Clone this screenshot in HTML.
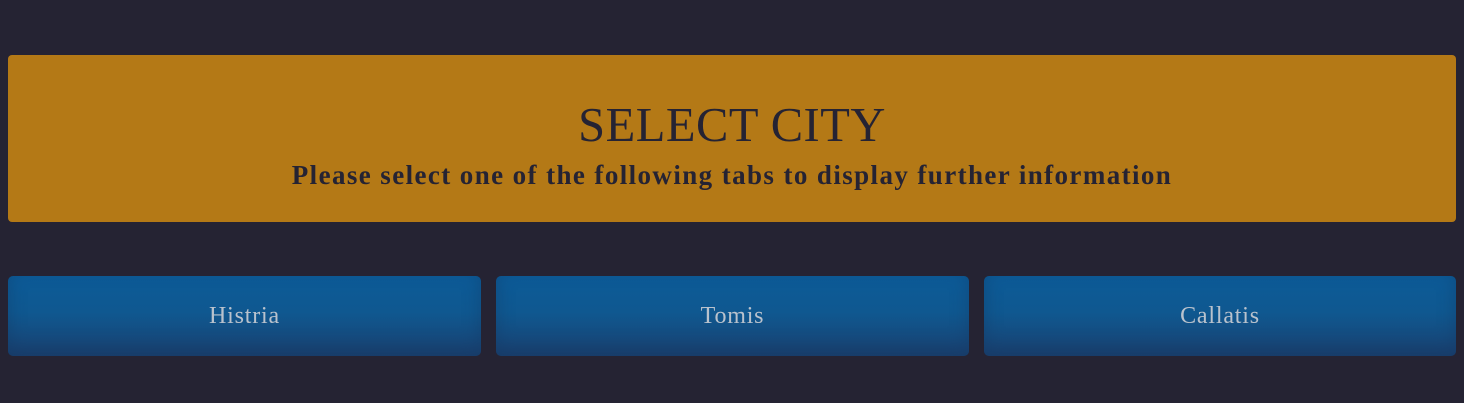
<!DOCTYPE html>
<html><head><style>
body{margin:0;width:1464px;height:403px;background:#252333;font-family:"Liberation Serif",serif;overflow:hidden}
.banner{position:absolute;left:8px;top:55px;width:1448px;height:167px;background:#b47916;border-radius:4px}
.b{position:absolute;top:276px;height:80px;width:473px;border-radius:5px;background:linear-gradient(#0c5b98 0%,#0f5890 45%,#1a4272 100%);color:#b9c2cd;font-size:24px;letter-spacing:0.8px;text-align:center;line-height:81px;box-shadow:inset 0 -8px 18px rgba(20,50,90,.4)}
</style></head><body>
<div class="banner"></div>
<div style="position:absolute;top:97px;left:0;width:1464px;text-align:center;color:#252333;font-size:48.5px;line-height:58px;letter-spacing:0.5px">SELECT CITY</div>
<div style="position:absolute;top:157px;left:0;width:1464px;text-align:center;color:#252333;font-size:27px;font-weight:bold;line-height:36px;letter-spacing:1.4px">Please select one of the following tabs to display further information</div>
<div class="b" style="left:8px">Histria</div>
<div class="b" style="left:496px">Tomis</div>
<div class="b" style="left:984px;width:472px">Callatis</div>
</body></html>
